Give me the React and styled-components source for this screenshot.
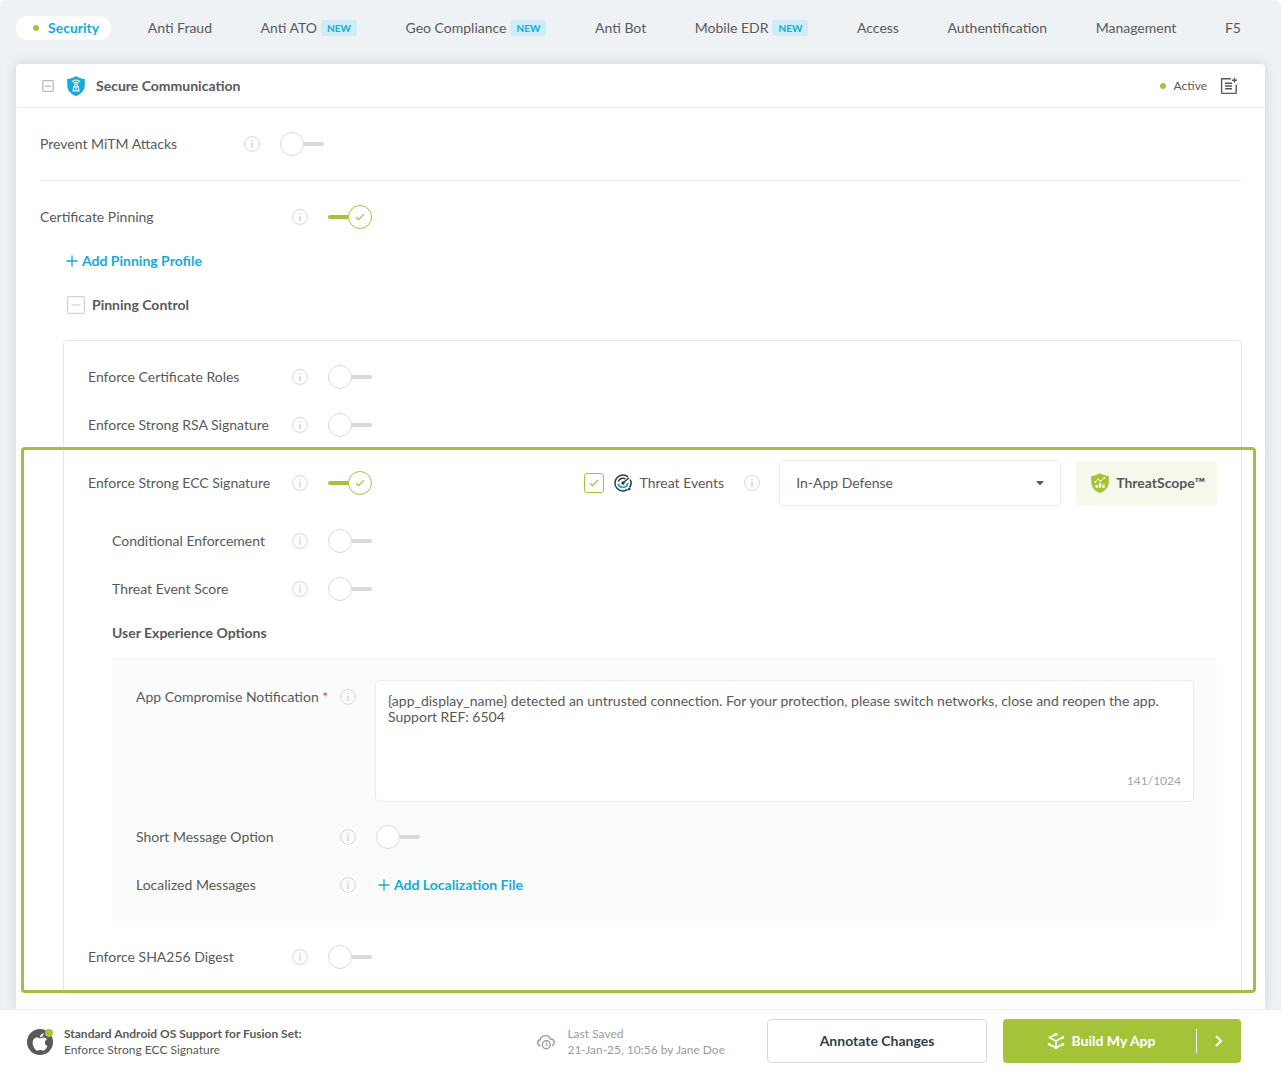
import React, { useState } from "react";
import styled, { createGlobalStyle } from "styled-components";
import { FaApple } from "react-icons/fa";

const color = {
  text: "#595959",
  dark: "#2f3e46",
  muted: "#9b9b9b",
  blue: "#15aad9",
  green: "#a4c339",
  line: "#e9ebec",
  panelLine: "#dfe7ef",
  control: "#d9d9d9",
  page: "#eef2f5",
};

const GlobalStyle = createGlobalStyle`
  *, *::before, *::after { box-sizing: border-box; }
  body {
    margin: 0;
    background: #ffffff;
    color: ${color.text};
    font: 400 14px/16px Lato, "Liberation Sans", sans-serif;
  }
  button, input, select, textarea { font: inherit; color: inherit; margin: 0; }
  h2, h3, h4, p { margin: 0; font: inherit; font-weight: 700; }
`;

const Page = styled.div`
  display: flex;
  flex-direction: column;
  min-height: 100vh;
  background: ${color.page};
  border-radius: 6px 6px 0 0;
`;

const TabBar = styled.nav`
  display: flex;
  justify-content: space-between;
  gap: 16px;
  padding: 16px 28px 24px 16px;
  white-space: nowrap;
`;

const Tab = styled.a`
  display: flex;
  align-items: center;
  gap: 4px;
  height: 24px;
  padding: 0 12px;
  border-radius: 12px;
  text-decoration: none;
  color: ${(p) => (p.$active ? color.blue : color.text)};
  background: ${(p) => (p.$active ? "#ffffff" : "transparent")};
  font-weight: ${(p) => (p.$active ? 700 : 400)};
`;

const Dot = styled.span`
  width: 6px;
  height: 6px;
  border-radius: 50%;
  background: ${color.green};
  margin: 0 ${(p) => p.$space}px;
`;

const NewBadge = styled.span`
  height: 16px;
  padding: 0 6px;
  border-radius: 3px;
  background: #cdedf8;
  color: ${color.blue};
  font-size: 10px;
  font-weight: 700;
`;

const Main = styled.main`
  flex: 1;
  display: flex;
  flex-direction: column;
  padding: 0 16px;
`;

const Card = styled.section`
  flex: 1;
  padding-bottom: 16px;
  border-radius: 4px 4px 0 0;
  background: #ffffff;
  box-shadow: 0 0 12px rgba(60, 80, 100, 0.2);
`;

const CardHeader = styled.header`
  display: flex;
  align-items: center;
  gap: 10px;
  height: 44px;
  padding: 0 24px;
  border-bottom: 1px solid ${color.line};
  border-radius: 4px;
`;

const Status = styled.span`
  display: flex;
  align-items: center;
  gap: 4px;
  margin-left: auto;
  font-size: 12px;
`;

const IconButton = styled.button`
  display: grid;
  place-items: center;
  flex: none;
  width: ${(p) => p.$size}px;
  height: ${(p) => p.$size}px;
  padding: 0;
  border: 0;
  background: none;
  cursor: pointer;
`;

const Group = styled.div`
  margin: 0 24px;
  padding: 12px 0;
  border-bottom: 1px solid ${color.line};
`;

const PinningGroup = styled.div`
  margin: 0 24px;
  padding-top: 12px;
`;

const Row = styled.div`
  display: flex;
  align-items: center;
  min-height: ${(p) => p.$height || 48}px;
  padding-left: ${(p) => p.$indent || 0}px;
`;

const RowLabel = styled.label`
  flex: none;
  width: ${(p) => p.$width}px;
`;

const InfoButton = styled(IconButton)`
  margin-right: 20px;
`;

const Indented = styled.div`
  display: flex;
  flex-direction: column;
  gap: 4px;
  padding-left: 24px;
  margin-bottom: 16px;
`;

const Heading = styled.div`
  display: flex;
  align-items: center;
  gap: 4px;
  height: 40px;
`;

const LinkButton = styled.button`
  display: flex;
  align-items: center;
  gap: 2px;
  padding: 0;
  border: 0;
  background: none;
  color: ${color.blue};
  font-weight: 700;
  cursor: pointer;
`;

const Panel = styled.div`
  margin-left: 24px;
  padding-top: 12px;
  border-radius: 4px;
  box-shadow: 0 0 0 1px ${color.panelLine};
`;

const PanelRows = styled.div`
  padding: 0 24px;
`;

const Highlighted = styled.div`
  position: relative;
  padding: 0 24px 12px;
  &::before {
    content: "";
    position: absolute;
    inset: -2px -15px 0 -43px;
    border: 3px solid #9fc243;
    border-radius: 4px;
    pointer-events: none;
  }
`;

const SwitchBox = styled.span`
  position: relative;
  display: flex;
  flex: none;
  align-items: center;
  flex-direction: ${(p) => (p.$on ? "row-reverse" : "row")};
  width: 44px;
  height: 24px;
`;

const SwitchInput = styled.input`
  position: absolute;
  inset: 0;
  width: 100%;
  height: 100%;
  opacity: 0;
  cursor: pointer;
`;

const Knob = styled.span`
  display: grid;
  place-items: center;
  width: 24px;
  height: 24px;
  border: 1px solid ${(p) => (p.$on ? color.green : color.control)};
  border-radius: 50%;
  background: #ffffff;
`;

const Track = styled.span`
  flex: 1;
  height: 4px;
  border-radius: ${(p) => (p.$on ? "2px 0 0 2px" : "0 2px 2px 0")};
  background: ${(p) => (p.$on ? color.green : color.control)};
`;

const Threat = styled.div`
  display: flex;
  align-items: center;
  margin-left: auto;
`;

const ThreatLabel = styled.label`
  display: flex;
  align-items: center;
  gap: 4px;
  margin: 0 20px 0 8px;
`;

const TickBox = styled.span`
  position: relative;
  display: grid;
  place-items: center;
  width: 20px;
  height: 20px;
  border: 1px solid ${color.green};
  border-radius: 3px;
  background: #ffffff;
`;

const SelectBox = styled.span`
  display: grid;
  grid-template-columns: 1fr 40px;
  align-items: center;
  justify-items: center;
  width: 280px;
  height: 44px;
  border-radius: 4px;
  background: #ffffff;
  box-shadow: 0 0 0 1px ${color.line};
  svg { grid-area: 1 / 2; pointer-events: none; }
`;

const Select = styled.select`
  grid-area: 1 / 1 / 2 / 3;
  width: 100%;
  height: 100%;
  padding: 0 16px;
  border: 0;
  appearance: none;
  background: none;
`;

const ScopeButton = styled.button`
  display: flex;
  align-items: center;
  gap: 6px;
  height: 44px;
  margin-left: 16px;
  padding: 0 12px 0 14px;
  border: 0;
  border-radius: 3px;
  background: #f6f8eb;
  font-weight: 700;
  cursor: pointer;
`;

const Options = styled.div`
  margin: 4px 0 12px 24px;
  padding: 16px 24px 12px;
  border-radius: 4px;
  background: #fafcfb;
`;

const MessageRow = styled.div`
  display: flex;
  align-items: flex-start;
  padding-bottom: 12px;
`;

const Required = styled.span`
  color: #f0326e;
`;

const MessageBox = styled.div`
  flex: 1;
  display: flex;
  flex-direction: column;
  height: 120px;
  margin-top: 8px;
  padding: 12px;
  border-radius: 4px;
  background: #ffffff;
  box-shadow: 0 0 0 1px ${color.line};
`;

const Message = styled.textarea`
  flex: 1;
  padding: 0;
  border: 0;
  outline: 0;
  resize: none;
  overflow: hidden;
  background: none;
`;

const Counter = styled.span`
  align-self: flex-end;
  color: #a5a5a5;
  font-size: 12px;
`;

const Footer = styled.footer`
  position: sticky;
  bottom: 0;
  display: flex;
  align-items: center;
  gap: 16px;
  min-height: 64px;
  padding: 0 40px 0 24px;
  background: #ffffff;
  box-shadow: inset 0 1px 0 #eceeef;
  font-size: 12px;
`;

const FusionSet = styled.div`
  display: flex;
  align-items: center;
  gap: 8px;
  padding-top: 2px;
`;

const Platform = styled.span`
  position: relative;
  display: grid;
  place-items: center;
  width: 26px;
  height: 26px;
  margin: 0 3px;
  border-radius: 50%;
  background: ${color.text};
  color: #ffffff;
`;

const PlatformDot = styled.span`
  position: absolute;
  top: 0;
  right: 0;
  width: 8px;
  height: 8px;
  border-radius: 50%;
  background: ${color.green};
`;

const Saved = styled.div`
  display: flex;
  align-items: center;
  gap: 12px;
  margin: 0 26px 0 auto;
  padding-top: 2px;
  color: ${color.muted};
`;

const AnnotateButton = styled.button`
  width: 220px;
  height: 44px;
  border: 1px solid ${color.control};
  border-radius: 4px;
  background: #ffffff;
  color: ${color.dark};
  font-size: 14px;
  font-weight: 700;
  cursor: pointer;
`;

const BuildGroup = styled.div`
  display: flex;
  align-items: center;
  height: 44px;
  border-radius: 4px;
  background: ${color.green};
  color: #ffffff;
  font-size: 14px;
`;

const BuildButton = styled.button`
  display: flex;
  align-items: center;
  justify-content: center;
  gap: 6px;
  width: ${(p) => p.$width}px;
  height: 24px;
  padding: 0 0 0 ${(p) => (p.$divided ? 0 : 4)}px;
  border: 0;
  border-left: ${(p) => (p.$divided ? "1px solid #ffffff" : "0")};
  background: none;
  font-weight: 700;
  cursor: pointer;
`;

const CheckMark = () => (
  <svg width="10" height="8" viewBox="0 0 10 8" fill="none" stroke={color.green} strokeWidth="1.3">
    <path d="M1 4.2 3.6 6.7 9 1.1" />
  </svg>
);

const InfoIcon = () => (
  <svg width="16" height="16" viewBox="0 0 16 16" fill="none" stroke="#d6d6d6">
    <circle cx="8" cy="8" r="7.4" />
    <path d="M8 7v5M8 4v1.6" strokeWidth="1.6" />
  </svg>
);

const CollapseIcon = ({ size, stroke }) => (
  <svg width={size} height={size} viewBox={`0 0 ${size} ${size}`} fill="none" stroke={stroke} strokeWidth="1.3">
    <rect x=".7" y=".7" width={size - 1.4} height={size - 1.4} rx="1" />
    <path d={`M${size / 4} ${size / 2}H${size * 0.75}`} />
  </svg>
);

const PlusIcon = () => (
  <svg width="16" height="16" viewBox="0 0 16 16" fill="none" stroke={color.blue} strokeWidth="1.3">
    <path d="M8 2.6v10.8M2.6 8h10.8" />
  </svg>
);

const shieldPath = "M10 0C12.5 1.8 15.5 2.8 18.8 2.9V9c0 5-3.4 9.2-8.8 11C4.6 18.2 1.2 14 1.2 9V2.9C4.5 2.8 7.5 1.8 10 0Z";

const SecureShield = () => (
  <svg width="20" height="20" viewBox="0 0 20 20" fill="none" stroke="#fff" strokeWidth="1.1">
    <path d={shieldPath} fill={color.blue} stroke="none" />
    <path d="M5.8 5.8C8.2 3.6 11.8 3.6 14.2 5.8M7.5 7.4c1.5-1.2 3.500-1.200 5 0" />
    <path d="M8.600 10.600V9.300c0-1.500 2.800-1.500 2.800 0v1.300M7.700 10.900h4.600l.6 4H7.100Z" />
    <path d="M10 12v1.800" />
  </svg>
);

const ScopeShield = () => (
  <svg width="20" height="20" viewBox="0 0 20 20" fill="#fff">
    <path d={shieldPath} fill={color.green} />
    <path d="M5.500 12h2.300v2.800H5.500zM8.900 10h2.300v4.800H8.900zM12.300 11.500h2.300v3.300h-2.300z" />
    <path d="M5.200 9 8 6.300l2.600 1.800L14.400 4.800" fill="none" stroke="#fff" strokeWidth=".8" />
    <circle cx="5.400" cy="8.800" r=".9" />
    <circle cx="8" cy="6.300" r=".9" />
    <circle cx="10.700" cy="8" r=".9" />
    <circle cx="14.300" cy="4.900" r=".9" />
  </svg>
);

const ThreatIcon = () => (
  <svg width="24" height="20" viewBox="1 0 24 20" fill="none">
    <path d="M16.800 16.400A8 8 0 1 1 17 3.800" stroke={color.dark} strokeWidth="1.500" />
    <path d="M19.200 6.500A8 8 0 0 1 18.600 14.500" stroke={color.dark} strokeWidth="1.500" />
    <circle cx="18.300" cy="16.100" r="1.300" fill={color.dark} />
    <path d="M7.300 8.500A5 5 0 0 1 14.500 5.900" stroke={color.dark} strokeWidth="1.500" />
    <path d="M7.200 10.800A4.900 4.900 0 0 0 16.800 10" stroke={color.blue} strokeWidth="1.900" />
    <path d="m12 10 6-5.200" stroke={color.dark} strokeWidth="1.500" />
    <circle cx="12" cy="10" r="1.700" fill={color.dark} />
  </svg>
);

const NoteIcon = () => (
  <svg width="18" height="18" viewBox="0 0 18 18" fill="none" stroke={color.text} strokeWidth="1.4">
    <path d="M11 1.700H2.200a.6.6 0 0 0-.6.6v13.500c0 .3.300.6.600.6h13.400c.3 0 .6-.3.600-.6V7.500" />
    <path d="M5 6.200h7M5 9h7M5 11.800h7M14.500.800v5M12 3.300h5" />
  </svg>
);

const CloudIcon = () => (
  <svg width="18" height="16" viewBox="1 0 18 16" fill="none" stroke={color.muted} strokeWidth="1.400">
    <path d="M4.400 11.700C.8 11.200.8 6.200 4.300 5.700 5.200.6 13 .3 14.400 5c4.300 0 5.200 5.300 1.700 6.600" />
    <circle cx="10.300" cy="10.700" r="4" />
    <path d="M10.300 8.600v2.300l1.200.8" strokeWidth="1.100" />
  </svg>
);

const BuildIcon = () => (
  <svg width="18" height="18" viewBox="0 0 18 18" fill="none" stroke="#fff" strokeWidth="1.700" strokeLinejoin="round">
    <path d="M9 2.300 2.400 5.600 9 8.900l6.600-3.300M9 8.900v6.900M2.400 12.400 9 15.800l6.600-3.400" />
    <g fill="#fff" stroke="none">
      <circle cx="9" cy="2.200" r="1.500" />
      <circle cx="15.700" cy="5.600" r="1.500" />
      <circle cx="2.300" cy="12.300" r="1.500" />
      <circle cx="15.700" cy="12.300" r="1.500" />
      <circle cx="9" cy="15.800" r="1.500" />
    </g>
  </svg>
);

function Info({ about }) {
  return (
    <InfoButton type="button" $size={16} aria-label={`About ${about}`}>
      <InfoIcon />
    </InfoButton>
  );
}

function Switch({ id, initial = false }) {
  const [on, setOn] = useState(initial);
  return (
    <SwitchBox $on={on}>
      <Knob $on={on}>{on && <CheckMark />}</Knob>
      <Track $on={on} />
      <SwitchInput id={id} type="checkbox" role="switch" checked={on} onChange={() => setOn(!on)} />
    </SwitchBox>
  );
}

function Setting({ id, label, width = 204, indent, height, on, children }) {
  return (
    <Row $indent={indent} $height={height}>
      <RowLabel htmlFor={id} $width={width}>{label}</RowLabel>
      <Info about={label} />
      <Switch id={id} initial={on} />
      {children}
    </Row>
  );
}

function ThreatEvents() {
  const [checked, setChecked] = useState(true);
  return (
    <Threat>
      <TickBox>
        {checked && <CheckMark />}
        <SwitchInput id="threat-events" type="checkbox" checked={checked} onChange={() => setChecked(!checked)} />
      </TickBox>
      <ThreatLabel htmlFor="threat-events">
        <ThreatIcon />
        Threat Events
      </ThreatLabel>
      <Info about="Threat Events" />
      <SelectBox>
        <Select aria-label="Threat Events mode" defaultValue="In-App Defense">
          <option>In-App Defense</option>
        </Select>
        <svg width="8" height="5" viewBox="0 0 8 5" fill={color.text}>
          <path d="M0 0h8L4 4.600Z" />
        </svg>
      </SelectBox>
      <ScopeButton type="button">
        <ScopeShield />
        ThreatScope™
      </ScopeButton>
    </Threat>
  );
}

const tabs = [
  { name: "Security", active: true },
  { name: "Anti Fraud" },
  { name: "Anti ATO", fresh: true },
  { name: "Geo Compliance", fresh: true },
  { name: "Anti Bot" },
  { name: "Mobile EDR", fresh: true },
  { name: "Access" },
  { name: "Authentification" },
  { name: "Management" },
  { name: "F5" },
];

const message =
  "{app_display_name} detected an untrusted connection. For your protection, please switch networks, close and reopen the app. Support REF: 6504";

export default function App() {
  return (
    <Page>
      <GlobalStyle />
      <TabBar>
        {tabs.map((tab) => (
          <Tab key={tab.name} href="#" $active={tab.active}>
            {tab.active && <Dot $space={5} />}
            {tab.name}
            {tab.fresh && <NewBadge>NEW</NewBadge>}
          </Tab>
        ))}
      </TabBar>

      <Main>
        <Card>
          <CardHeader>
            <IconButton type="button" $size={16} aria-label="Collapse Secure Communication">
              <CollapseIcon size={12} stroke="#b9b9b9" />
            </IconButton>
            <SecureShield />
            <h2>Secure Communication</h2>
            <Status>
              <Dot $space={4} />
              Active
            </Status>
            <IconButton type="button" $size={24} aria-label="Add note">
              <NoteIcon />
            </IconButton>
          </CardHeader>

          <Group>
            <Setting id="mitm" label="Prevent MiTM Attacks" />
          </Group>

          <PinningGroup>
            <Setting id="pinning" label="Certificate Pinning" width={252} on />
            <Indented>
              <Heading>
                <LinkButton type="button">
                  <PlusIcon />
                  Add Pinning Profile
                </LinkButton>
              </Heading>
              <Heading>
                <IconButton type="button" $size={24} aria-label="Collapse Pinning Control">
                  <CollapseIcon size={18} stroke="#d3d3d3" />
                </IconButton>
                <h3>Pinning Control</h3>
              </Heading>
            </Indented>

            <Panel>
              <PanelRows>
                <Setting id="roles" label="Enforce Certificate Roles" />
                <Setting id="rsa" label="Enforce Strong RSA Signature" />
              </PanelRows>
              <Highlighted>
                <Setting id="ecc" label="Enforce Strong ECC Signature" height={68} on>
                  <ThreatEvents />
                </Setting>
                <Setting id="conditional" label="Conditional Enforcement" width={180} indent={24} />
                <Setting id="score" label="Threat Event Score" width={180} indent={24} />
                <Row $height={40} $indent={24}>
                  <h4>User Experience Options</h4>
                </Row>
                <Options>
                  <MessageRow>
                    <Row>
                      <RowLabel htmlFor="notification" $width={204}>
                        App Compromise Notification <Required>*</Required>
                      </RowLabel>
                      <Info about="App Compromise Notification" />
                    </Row>
                    <MessageBox>
                      <Message id="notification" defaultValue={message} />
                      <Counter>141/1024</Counter>
                    </MessageBox>
                  </MessageRow>
                  <Setting id="short" label="Short Message Option" />
                  <Row>
                    <RowLabel as="span" $width={204}>Localized Messages</RowLabel>
                    <Info about="Localized Messages" />
                    <LinkButton type="button">
                      <PlusIcon />
                      Add Localization File
                    </LinkButton>
                  </Row>
                </Options>
                <Setting id="sha" label="Enforce SHA256 Digest" />
              </Highlighted>
            </Panel>
          </PinningGroup>
        </Card>
      </Main>

      <Footer>
        <FusionSet>
          <Platform>
            <FaApple size={20} />
            <PlatformDot />
          </Platform>
          <div>
            <p>Standard Android OS Support for Fusion Set:</p>
            Enforce Strong ECC Signature
          </div>
        </FusionSet>
        <Saved>
          <CloudIcon />
          <div>
            Last Saved
            <br />
            21-Jan-25, 10:56 by Jane Doe
          </div>
        </Saved>
        <AnnotateButton type="button">Annotate Changes</AnnotateButton>
        <BuildGroup>
          <BuildButton type="button" $width={193}>
            <BuildIcon />
            Build My App
          </BuildButton>
          <BuildButton type="button" $width={45} $divided aria-label="More build options">
            <svg width="8" height="12" viewBox="0 0 8 12" fill="none" stroke="#fff" strokeWidth="2">
              <path d="m1 1 5 5-5 5" />
            </svg>
          </BuildButton>
        </BuildGroup>
      </Footer>
    </Page>
  );
}
